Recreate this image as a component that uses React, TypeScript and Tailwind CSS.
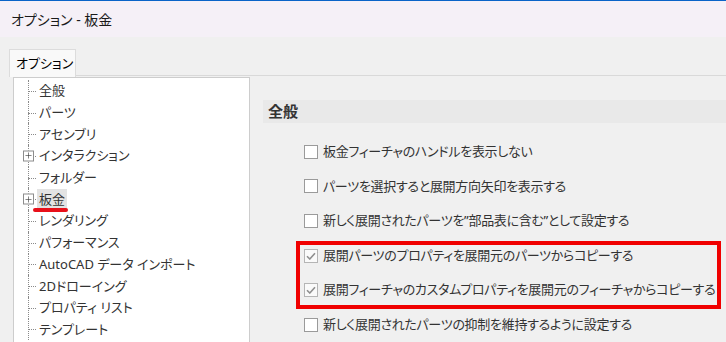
import { Plus } from "lucide-react";

const font = "font-['Noto_Sans','Noto_Sans_CJK_JP',sans-serif] [font-feature-settings:'palt']";

type TreeItem = { label: string; expandable?: boolean; selected?: boolean };

const treeItems: TreeItem[] = [
  { label: "全般" },
  { label: "パーツ" },
  { label: "アセンブリ" },
  { label: "インタラクション", expandable: true },
  { label: "フォルダー" },
  { label: "板金", expandable: true, selected: true },
  { label: "レンダリング" },
  { label: "パフォーマンス" },
  { label: "AutoCAD データ インポート" },
  { label: "2Dドローイング" },
  { label: "プロパティ リスト" },
  { label: "テンプレート" },
];

const options = [
  { label: "板金フィーチャのハンドルを表示しない", checked: false },
  { label: "パーツを選択すると展開方向矢印を表示する", checked: false },
  { label: "新しく展開されたパーツを”部品表に含む”として設定する", checked: false },
  { label: "展開パーツのプロパティを展開元のパーツからコピーする", checked: true },
  { label: "展開フィーチャのカスタムプロパティを展開元のフィーチャからコピーする", checked: true },
  { label: "新しく展開されたパーツの抑制を維持するように設定する", checked: false },
];

function TreeRow({ item }: { item: TreeItem }) {
  return (
    <div className="flex items-center h-[21.7px]">
      {/* connector */}
      <div className="relative w-[9px] h-full ml-[14px] shrink-0">
        <div className="absolute left-0 top-0 bottom-0 border-l border-dotted border-[#8a8a8a]" />
        <div className="absolute left-0 top-1/2 w-[8px] border-t border-dotted border-[#8a8a8a]" />
        {item.expandable && (
          <div className="absolute left-[-5px] top-1/2 -translate-y-1/2 w-[11px] h-[11px] flex items-center justify-center bg-white border border-[#8c8c8c]">
            <Plus size={10} strokeWidth={1.6} className="text-[#333]" />
          </div>
        )}
      </div>
      <div className="relative">
        <span
          className={`block px-[2px] leading-[21px] text-[13px] text-[#333] whitespace-nowrap ${item.selected ? "bg-[#e3e3e3]" : ""}`}
        >
          {item.label}
        </span>
        {item.selected && (
          <div className="absolute left-[-4px] right-[-1px] bottom-[-2px] h-[4px] rounded-full bg-[#e8101a]" />
        )}
      </div>
    </div>
  );
}

function Checkbox({ checked }: { checked: boolean }) {
  return (
    <div
      className={`w-[14px] h-[14px] shrink-0 flex items-center justify-center border ${checked ? "border-[#b5b5b5] bg-[#fafafa]" : "border-[#9a9a9a] bg-white"}`}
    >
      {checked && (
        <svg width="10" height="8" viewBox="0 0 10 8">
          <path d="M1 4.2 L3.8 7 L9 1.2" fill="none" stroke="#8f8f8f" strokeWidth="1.6" />
        </svg>
      )}
    </div>
  );
}

export default function App() {
  return (
    <div className={`relative w-[726px] h-[342px] overflow-hidden bg-[#f0f0f0] flex flex-col ${font}`}>
      {/* title bar */}
      <div className="h-[37px] shrink-0 border-t border-[#0a64c8] bg-[#f5f0f7] flex items-center pl-[11px]">
        <span className="text-[14px] text-[#1a1a1a]">オプション - 板金</span>
      </div>

      {/* tab strip */}
      <div className="flex items-end h-[40px] shrink-0">
        <div className="w-[9px] h-[2px] shrink-0" />
        <div className="w-[67px] h-[28px] shrink-0 bg-[#f9f9f9] border border-b-0 border-[#dcdcdc] flex items-center pl-[6px] text-[13px] text-black whitespace-nowrap">
          オプション
        </div>
        <div className="flex-1 border-b border-[#d9d9d9] mb-[1px]" />
      </div>

      <div className="flex flex-1 min-h-0">
        {/* tree */}
        <div className="ml-[13px] w-[237px] shrink-0 bg-white border border-b-0 border-[#cdcdcd] pt-[2px]">
          {treeItems.map((item) => (
            <TreeRow key={item.label} item={item} />
          ))}
        </div>

        {/* right panel */}
        <div className="flex-1 min-w-0 flex flex-col">
          <div className="mt-[23px] ml-[13px] h-[27px] bg-[#e9e9e9] flex items-center pl-[5px]">
            <span className="text-[15px] font-bold text-[#333]">全般</span>
          </div>
          <div className="pt-[11.5px] pl-[54px]">
            {options.map((o) => (
              <div key={o.label} className="flex items-center h-[34.6px] gap-[5px]">
                <Checkbox checked={o.checked} />
                <span className="text-[13px] tracking-[-0.3px] text-[#333] whitespace-nowrap">{o.label}</span>
              </div>
            ))}
          </div>
        </div>
      </div>

      {/* red annotation */}
      <div className="absolute left-[296px] top-[241px] w-[425px] h-[68px] border-[4px] border-[#f00000]" />
    </div>
  );
}
